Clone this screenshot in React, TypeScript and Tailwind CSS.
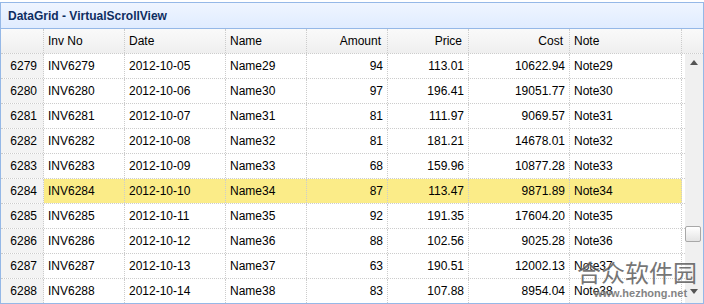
import React from "react";

const rows: [number, string, string, string, number, string, string, string][] = [
  [6279, "INV6279", "2012-10-05", "Name29", 94, "113.01", "10622.94", "Note29"],
  [6280, "INV6280", "2012-10-06", "Name30", 97, "196.41", "19051.77", "Note30"],
  [6281, "INV6281", "2012-10-07", "Name31", 81, "111.97", "9069.57", "Note31"],
  [6282, "INV6282", "2012-10-08", "Name32", 81, "181.21", "14678.01", "Note32"],
  [6283, "INV6283", "2012-10-09", "Name33", 68, "159.96", "10877.28", "Note33"],
  [6284, "INV6284", "2012-10-10", "Name34", 87, "113.47", "9871.89", "Note34"],
  [6285, "INV6285", "2012-10-11", "Name35", 92, "191.35", "17604.20", "Note35"],
  [6286, "INV6286", "2012-10-12", "Name36", 88, "102.56", "9025.28", "Note36"],
  [6287, "INV6287", "2012-10-13", "Name37", 63, "190.51", "12002.13", "Note37"],
  [6288, "INV6288", "2012-10-14", "Name38", 83, "107.88", "8954.04", "Note38"],
];

const cell = "border-r border-dotted border-[#ccc] flex items-center overflow-hidden whitespace-nowrap";

export default function App() {
  return (
    <div className="w-[704px] pt-[2px] bg-white" style={{ fontFamily: '"Liberation Sans", Arial, sans-serif' }}>
      <div className="relative h-[302px] border border-[#95b8e7] overflow-hidden flex flex-col text-[12px] text-black">
        <div className="h-[26px] shrink-0 border-b border-[#95b8e7] bg-gradient-to-b from-[#eff5ff] to-[#e0ecff] px-[7px] flex items-center font-bold text-[12px] text-[#0e2d5f]">
          DataGrid - VirtualScrollView
        </div>
        <div className="h-[25px] shrink-0 flex border-b border-dotted border-[#ccc] bg-gradient-to-b from-[#fafafa] to-[#efefef]">
          <div className={`${cell} w-[43px]`}></div>
          <div className={`${cell} w-[81px] pl-[4px]`}>Inv No</div>
          <div className={`${cell} w-[101px] pl-[4px]`}>Date</div>
          <div className={`${cell} w-[81px] pl-[4px]`}>Name</div>
          <div className={`${cell} w-[81px] justify-end pr-[6px]`}>Amount</div>
          <div className={`${cell} w-[81px] justify-end pr-[6px]`}>Price</div>
          <div className={`${cell} w-[101px] justify-end pr-[6px]`}>Cost</div>
          <div className={`${cell} w-[112px] pl-[4px]`}>Note</div>
          <div className="flex-1"></div>
        </div>
        <div className="flex flex-1 min-h-0">
          <div className="w-[684px] flex flex-col">
            {rows.map((r) => {
              const hl = r[0] === 6284;
              const bg = hl ? "bg-[#fbec88]" : "bg-white";
              return (
                <div key={r[0]} className="h-[25px] shrink-0 flex border-b border-dotted border-[#ccc]">
                  <div className={`${cell} w-[43px] justify-end pr-[6px] bg-[#f3f3f3]`}>{r[0]}</div>
                  <div className={`${cell} w-[81px] pl-[4px] ${bg}`}>{r[1]}</div>
                  <div className={`${cell} w-[101px] pl-[4px] ${bg}`}>{r[2]}</div>
                  <div className={`${cell} w-[81px] pl-[4px] ${bg}`}>{r[3]}</div>
                  <div className={`${cell} w-[81px] justify-end pr-[4px] ${bg}`}>{r[4]}</div>
                  <div className={`${cell} w-[81px] justify-end pr-[4px] ${bg}`}>{r[5]}</div>
                  <div className={`${cell} w-[101px] justify-end pr-[4px] ${bg}`}>{r[6]}</div>
                  <div className={`${cell} w-[112px] pl-[4px] ${bg}`}>{r[7]}</div>
                  <div className="flex-1 bg-white"></div>
                </div>
              );
            })}
          </div>
          <div className="relative w-[18px] bg-[#f0f0f0] flex flex-col items-center justify-between pt-[6px] pb-[9px]">
            <svg width="8" height="5" viewBox="0 0 8 5"><path d="M0 5 L4 0 L8 5 Z" fill="#555" /></svg>
            <div className="absolute left-0 top-[172px] w-[16px] h-[16px] rounded-[2px] border border-[#a8a8a8] bg-gradient-to-b from-[#ffffff] to-[#e4e4e4]"></div>
            <svg width="8" height="5" viewBox="0 0 8 5"><path d="M0 0 L8 0 L4 5 Z" fill="#555" /></svg>
          </div>
        </div>
        <div
          className="absolute left-[576px] top-[255px] text-[24px] leading-[28px] text-[#555] opacity-80 whitespace-nowrap"
          style={{ fontFamily: '"Noto Sans CJK SC", sans-serif', textShadow: "0 0 2px #fff" }}
        >
          合众软件园
        </div>
        <div className="absolute left-[593px] top-[284px] text-[11px] font-bold leading-[13px] text-[#666] opacity-80 whitespace-nowrap" style={{ textShadow: "0 0 2px #fff" }}>
          www.hezhong.net
        </div>
      </div>
    </div>
  );
}
